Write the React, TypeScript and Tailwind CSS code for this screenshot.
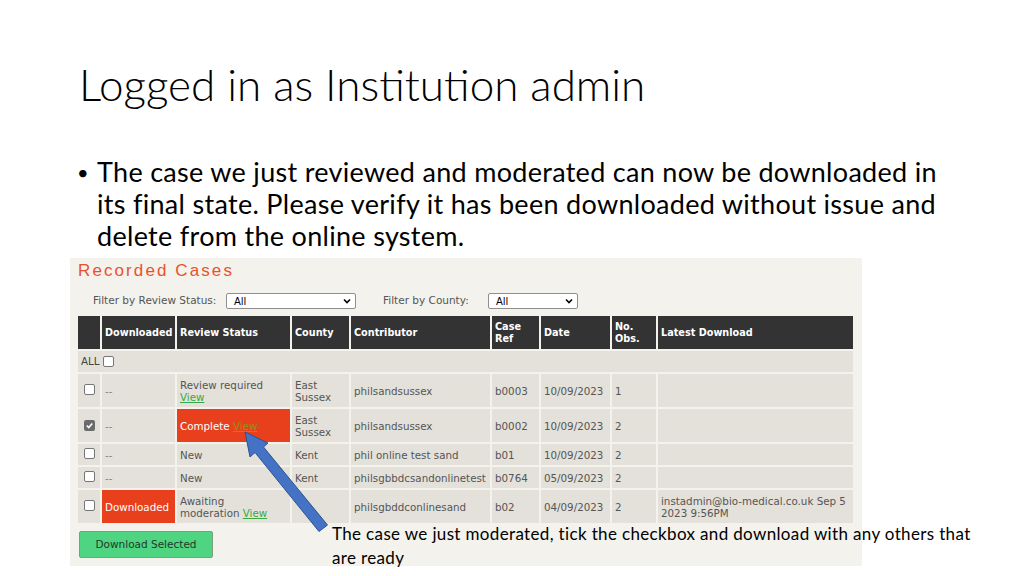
import React from 'react';

type Row = {
  checked?: boolean;
  downloaded?: boolean;
  status: React.ReactNode;
  statusRed?: boolean;
  county: React.ReactNode;
  contributor: string;
  ref: string;
  date: string;
  obs: string;
  latest?: React.ReactNode;
  h: string;
};

const ViewLink = ({ dark }: { dark?: boolean }) => (
  <span className={`underline ${dark ? 'text-[#9a8f12]' : 'text-[#3aa845]'}`}>View</span>
);

const Checkbox = ({ checked }: { checked?: boolean }) =>
  checked ? (
    <span className="inline-flex w-[11px] h-[11px] rounded-[2px] bg-[#6b6b6b] items-center justify-center">
      <svg width="9" height="9" viewBox="0 0 10 10">
        <path d="M2 5.2 L4.2 7.3 L8 2.8" fill="none" stroke="white" strokeWidth="1.8" />
      </svg>
    </span>
  ) : (
    <span className="inline-block w-[11px] h-[11px] rounded-[2px] border border-[#767676] bg-white" />
  );

const rows: Row[] = [
  {
    status: (
      <>
        Review required
        <br />
        <ViewLink />
      </>
    ),
    county: (
      <>
        East
        <br />
        Sussex
      </>
    ),
    contributor: 'philsandsussex',
    ref: 'b0003',
    date: '10/09/2023',
    obs: '1',
    h: 'h-[33px]',
  },
  {
    checked: true,
    status: (
      <>
        Complete <ViewLink dark />
      </>
    ),
    statusRed: true,
    county: (
      <>
        East
        <br />
        Sussex
      </>
    ),
    contributor: 'philsandsussex',
    ref: 'b0002',
    date: '10/09/2023',
    obs: '2',
    h: 'h-[33px]',
  },
  { status: 'New', county: 'Kent', contributor: 'phil online test sand', ref: 'b01', date: '10/09/2023', obs: '2', h: 'h-[21px]' },
  { status: 'New', county: 'Kent', contributor: 'philsgbbdcsandonlinetest', ref: 'b0764', date: '05/09/2023', obs: '2', h: 'h-[21px]' },
  {
    downloaded: true,
    status: (
      <>
        Awaiting
        <br />
        moderation <ViewLink />
      </>
    ),
    county: '',
    contributor: 'philsgbddconlinesand',
    ref: 'b02',
    date: '04/09/2023',
    obs: '2',
    latest: (
      <>
        instadmin@bio-medical.co.uk Sep 5
        <br />
        2023 9:56PM
      </>
    ),
    h: 'h-[33px]',
  },
];

const Select = ({ w }: { w: string }) => (
  <div className={`${w} h-[16px] bg-white border border-[#8f8f8f] rounded-[2px] flex items-center justify-between pl-[7px] pr-[4px] text-[10px] text-black`}>
    <span>All</span>
    <svg width="8" height="6" viewBox="0 0 8 6">
      <path d="M1 1.5 L4 4.5 L7 1.5" fill="none" stroke="black" strokeWidth="1.6" />
    </svg>
  </div>
);

export default function App() {
  const cell = 'bg-[#e3e1da] px-[3px] align-middle overflow-hidden whitespace-nowrap';
  return (
    <div className="relative w-[1024px] h-[576px] overflow-hidden bg-white font-['Lato',sans-serif] text-black">
      <h1 className="pl-[79px] pt-[60px] text-[44px] font-light leading-[48px] whitespace-nowrap">
        Logged in as Institution admin
      </h1>

      <div className="flex pl-[77px] mt-[48px] text-[27px] tracking-[0.3px] leading-[32px] whitespace-nowrap">
        <span className="w-[20px] text-[20px]">•</span>
        <p>
          The case we just reviewed and moderated can now be downloaded in
          <br />
          its final state. Please verify it has been downloaded without issue and
          <br />
          delete from the online system.
        </p>
      </div>

      <div className="ml-[70px] mt-[6px] w-[792px] h-[308px] bg-[#f3f2ec] font-['DejaVu_Sans',sans-serif] text-[#555]">
        <div className="pl-[8px] pt-[3px] text-[17px] leading-[20px] tracking-[2.1px] text-[#e8512f] font-['Liberation_Sans',sans-serif]">
          Recorded Cases
        </div>
        <div className="flex items-center h-[16px] mt-[12px] text-[10.5px]">
          <span className="pl-[23px] w-[156px]">Filter by Review Status:</span>
          <Select w="w-[130px]" />
          <span className="pl-[27px] w-[132px]">Filter by County:</span>
          <Select w="w-[90px]" />
        </div>

        <table className="w-[779px] mt-[5px] ml-[6px] border-separate border-spacing-[2px] table-fixed text-[10.3px] leading-[12px]">
          <colgroup>
            <col className="w-[22px]" />
            <col className="w-[73px]" />
            <col className="w-[113px]" />
            <col className="w-[57px]" />
            <col className="w-[139px]" />
            <col className="w-[47px]" />
            <col className="w-[69px]" />
            <col className="w-[44px]" />
            <col className="w-[195px]" />
          </colgroup>
          <thead>
            <tr className="h-[33px] bg-[#333] text-white font-bold text-left text-[9.7px]">
              <th className="bg-[#333]" />
              <th className="px-[3px]">Downloaded</th>
              <th className="px-[3px]">Review Status</th>
              <th className="px-[3px]">County</th>
              <th className="px-[3px]">Contributor</th>
              <th className="px-[3px]">
                Case
                <br />
                Ref
              </th>
              <th className="px-[3px]">Date</th>
              <th className="px-[3px]">
                No.
                <br />
                Obs.
              </th>
              <th className="px-[3px]">Latest Download</th>
            </tr>
          </thead>
          <tbody>
            <tr className="h-[21px]">
              <td colSpan={9} className={`${cell} text-[#444] leading-[11px]`}>
                <span className="inline-flex items-center gap-[3px]">
                  ALL <Checkbox />
                </span>
              </td>
            </tr>
            {rows.map((r, i) => (
              <tr key={i} className={r.h}>
                <td className={`${cell} text-center leading-[11px]`}>
                  <span className="inline-flex items-center">
                    <Checkbox checked={r.checked} />
                  </span>
                </td>
                {r.downloaded ? (
                  <td className="bg-[#e8401c] px-[3px] text-white">Downloaded</td>
                ) : (
                  <td className={`${cell} text-[#888]`}>--</td>
                )}
                <td className={r.statusRed ? 'bg-[#e8401c] px-[3px] text-white' : cell}>{r.status}</td>
                <td className={cell}>{r.county}</td>
                <td className={`${cell} px-[2px]`}>{r.contributor}</td>
                <td className={cell}>{r.ref}</td>
                <td className={cell}>{r.date}</td>
                <td className={cell}>{r.obs}</td>
                <td className={cell}>{r.latest}</td>
              </tr>
            ))}
          </tbody>
        </table>

        <button className="ml-[9px] mt-[6px] w-[134px] h-[27px] bg-[#4fd482] border border-[#7a9d84] rounded-[2px] text-[10.5px] text-[#1d3b26]">
          Download Selected
        </button>
      </div>

      <p className="absolute left-[332px] top-[522px] text-[17px] tracking-[0.35px] leading-[24px] text-black whitespace-nowrap">
        The case we just moderated, tick the checkbox and download with any others that
        <br />
        are ready
      </p>

      <svg className="absolute left-0 top-0" width="1024" height="576" viewBox="0 0 1024 576">
        <polygon
          points="245,432 268,443 263.5,447 327.5,525 319,531.5 255,452.5 250,457"
          fill="#4472c4"
          stroke="#2f528f"
          strokeWidth="1"
        />
      </svg>
    </div>
  );
}
